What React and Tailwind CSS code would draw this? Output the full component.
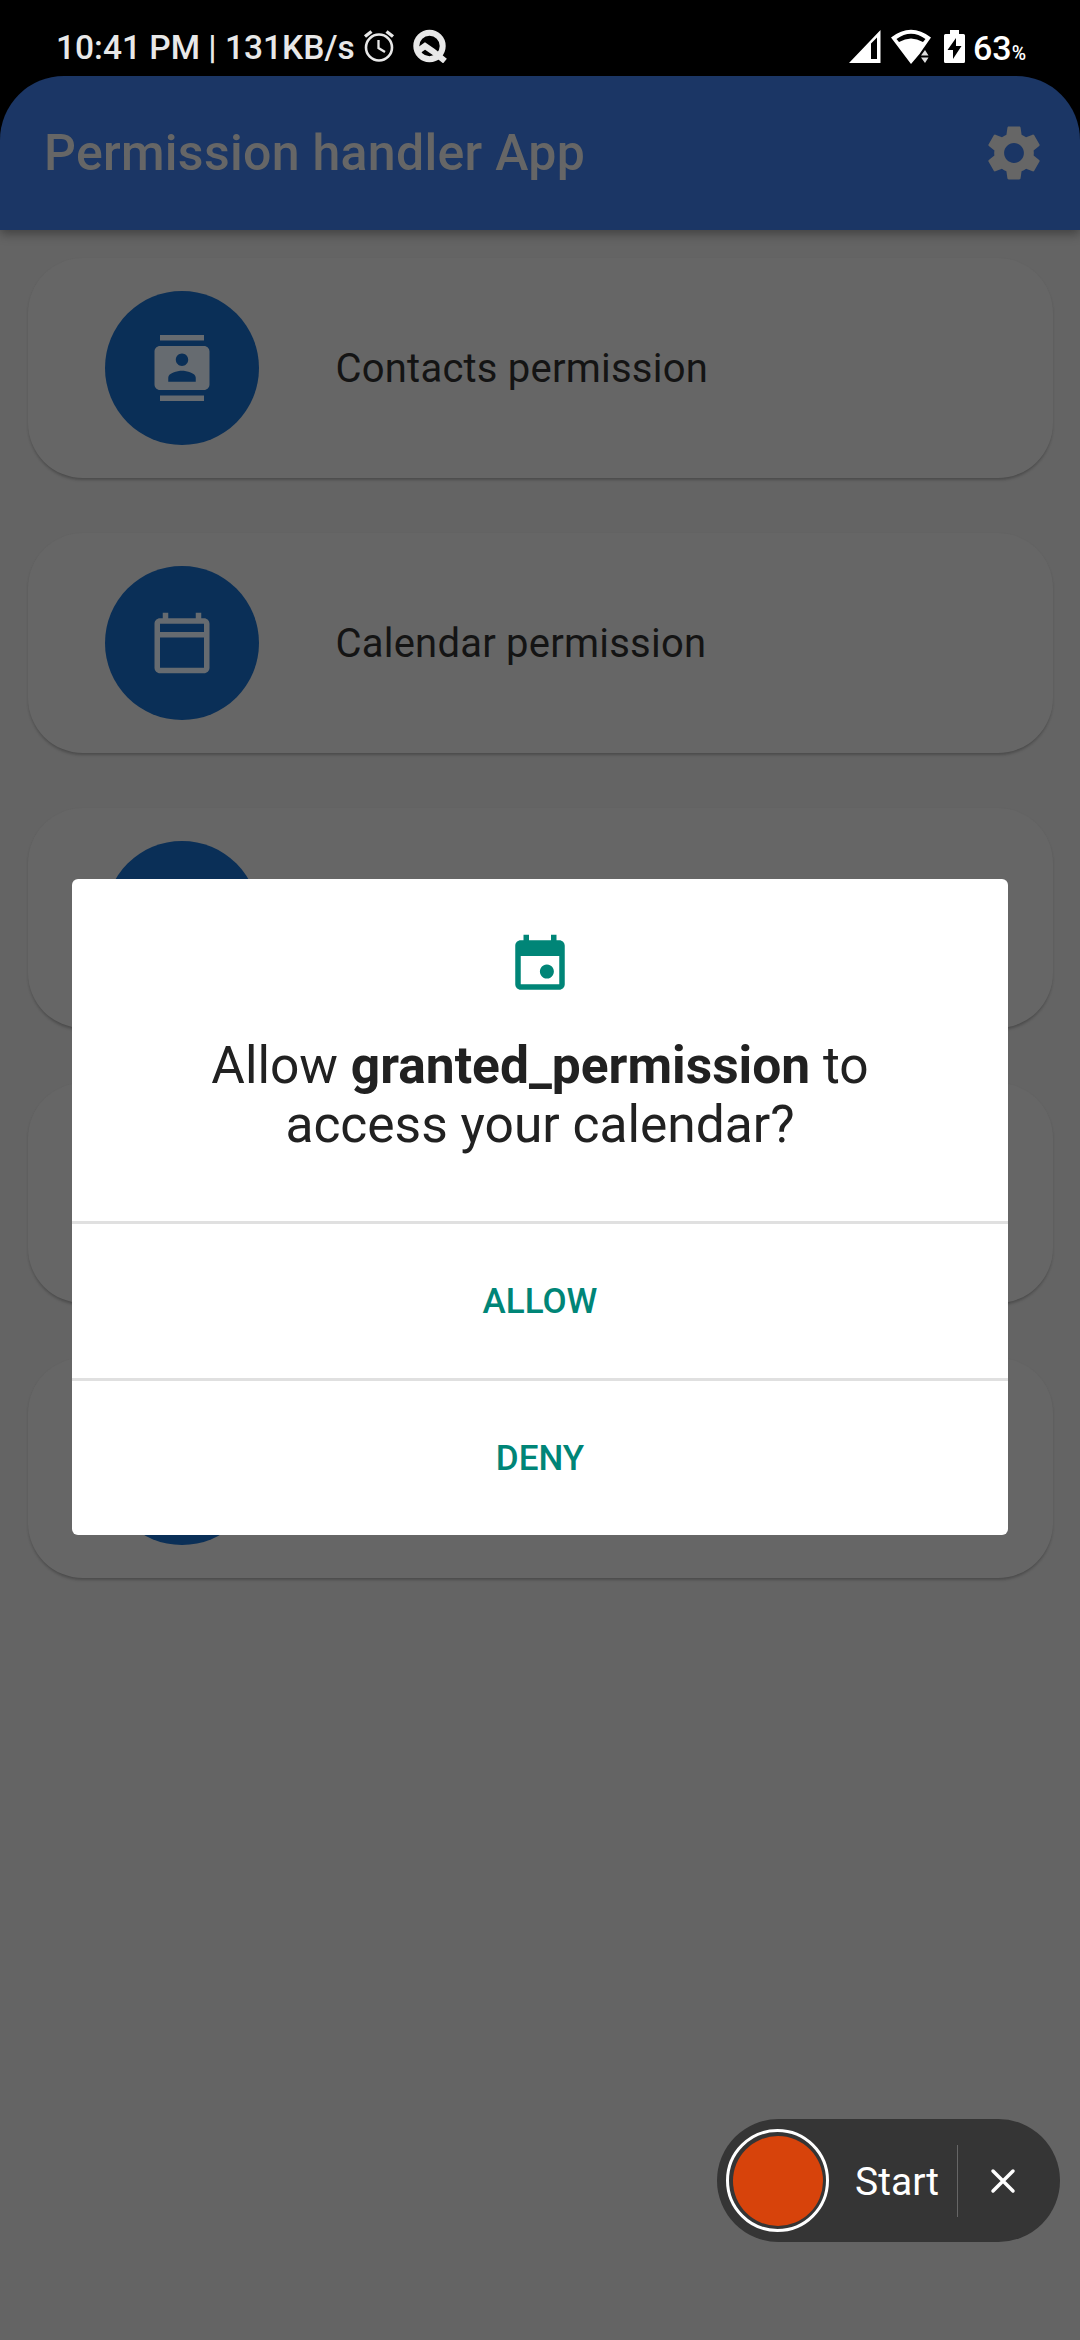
const Icon = ({ d, className, viewBox = "0 0 24 24" }) => (
  <svg viewBox={viewBox} className={className} fill="currentColor" fillRule="evenodd"><path d={d} /></svg>
);

const CONTACTS = "M20 0H4v2h16V0zM4 24h16v-2H4v2zM20 4H4c-1.1 0-2 .9-2 2v12c0 1.1.9 2 2 2h16c1.1 0 2-.9 2-2V6c0-1.1-.9-2-2-2zm-8 2.75c1.24 0 2.25 1.01 2.25 2.25s-1.01 2.25-2.25 2.25S9.75 10.24 9.75 9 10.76 6.75 12 6.75zM17 17H7v-1.5c0-1.67 3.33-2.5 5-2.5s5 .83 5 2.5V17z";
const CALENDAR = "M20 3h-1V1h-2v2H7V1H5v2H4c-1.1 0-2 .9-2 2v16c0 1.1.9 2 2 2h16c1.1 0 2-.9 2-2V5c0-1.1-.9-2-2-2zm0 18H4V10h16v11zm0-13H4V5h16v3z";
const SETTINGS = "M19.14 12.94c.04-.3.06-.61.06-.94 0-.32-.02-.64-.07-.94l2.03-1.58c.18-.14.23-.41.12-.61l-1.92-3.32c-.12-.22-.37-.29-.59-.22l-2.39.96c-.5-.38-1.03-.7-1.62-.94l-.36-2.54c-.04-.24-.24-.41-.48-.41h-3.84c-.24 0-.43.17-.47.41l-.36 2.54c-.59.24-1.13.57-1.62.94l-2.39-.96c-.22-.08-.47 0-.59.22L2.74 8.87c-.12.21-.08.47.12.61l2.03 1.58c-.05.3-.09.63-.09.94s.02.64.07.94l-2.03 1.58c-.18.14-.23.41-.12.61l1.92 3.32c.12.22.37.29.59.22l2.39-.96c.5.38 1.03.7 1.62.94l.36 2.54c.05.24.24.41.48.41h3.84c.24 0 .44-.17.47-.41l.36-2.54c.59-.24 1.13-.56 1.62-.94l2.39.96c.22.08.47 0 .59-.22l1.92-3.32c.12-.22.07-.47-.12-.61l-2.01-1.58zM12 15.6c-1.98 0-3.6-1.62-3.6-3.6s1.62-3.6 3.6-3.6 3.6 1.62 3.6 3.6-1.62 3.6-3.6 3.6z";

const rows = [
  { label: "Contacts permission", icon: CONTACTS },
  { label: "Calendar permission", icon: CALENDAR },
  { label: "", icon: null },
  { label: "", icon: null },
  { label: "", icon: null },
];

function StatusBar() {
  return (
    <div className="flex h-[76px] items-start bg-black">
      <div className="ml-[56px] mt-[28px] text-[33.5px] font-medium leading-[40px] whitespace-nowrap text-[#e8e8e8]">10:41 PM | 131KB/s</div>
      <svg className="ml-[8px] mt-[29px] h-[34px] w-[32px]" viewBox="0 0 32 34" fill="none" stroke="#e8e8e8" strokeWidth="2.6">
        <circle cx="16" cy="18.5" r="13" />
        <path d="M2 7.5 8.5 2.5M30 7.5 23.5 2.5" strokeWidth="3.4" />
        <path d="M15.5 11v8l6.5 4" strokeWidth="2.3" />
      </svg>
      <svg className="ml-[18px] mt-[29px] h-[34px] w-[34px]" viewBox="0 0 34 34" fill="none" stroke="#e8e8e8">
        <circle cx="16.5" cy="17" r="13.2" strokeWidth="6" />
        <path d="M5 22 12 17l8 5.500 12 9.500" strokeWidth="6" />
      </svg>
      <div className="ml-auto mr-[54px] mt-[29px] flex items-start text-white">
        <svg className="h-[35px] w-[32px]" viewBox="0 0 32 35">
          <path d="M0 34 31.500 1v33zM22 14.500v15.500h6V8.500z" fill="#fff" fillRule="evenodd" />
        </svg>
        <svg className="ml-[10px] h-[35px] w-[42px]" viewBox="0 0 42 35">
          <path d="M0 8.500Q20-7 40 8.500L33 18.500 28.500 25 20 35zM5.500 10 8 13Q20 6 32 13L34.500 10Q20-.5 5.500 10z" fill="#fff" fillRule="evenodd" />
          <path d="M30 26.500 34 21l3.500 5.500zM30 28.500h7.500L34 34z" fill="#ddd" />
        </svg>
        <svg className="ml-[11px] mt-px h-[33px] w-[21px]" viewBox="0 0 21 33">
          <path d="M6 0h9v4h4.500q1.500 0 1.500 1.500v26q0 1.500-1.500 1.500h-18Q0 33 0 31.500v-26Q0 4 1.500 4H6zM12 8 3.500 20H9v9L17.500 16H12z" fill="#fff" fillRule="evenodd" />
        </svg>
        <div className="ml-[8px] -mt-px text-[34px] font-medium leading-[40px]">63<span className="text-[19.5px]">%</span></div>
      </div>
    </div>
  );
}

function PermissionRow({ label, icon }) {
  return (
    <div className="flex h-[220px] shrink-0 items-center rounded-[55px] bg-[#666666] pl-[77px] shadow-[0_3px_3px_-1px_rgba(0,0,0,0.22),0_1px_3px_rgba(0,0,0,0.05)]">
      <div className="flex size-[154px] items-center justify-center rounded-full bg-[#0a2f57] text-[#666b70]">
        {icon && <Icon d={icon} className="size-[66px]" />}
      </div>
      <div className="ml-[77px] pt-[2px] text-[40px] leading-[47px] tracking-[0.22px] whitespace-nowrap text-[#141414]">{label}</div>
    </div>
  );
}

function PermissionDialog() {
  return (
    <div className="absolute left-[72px] top-[879px] flex h-[656px] w-[936px] flex-col overflow-hidden rounded-[6px] bg-white text-center">
      <div className="flex h-[342px] flex-col items-center">
        <Icon className="mt-[53px] size-[66px] text-[#008577]" d="M19 3h-1V1h-2v2H8V1H6v2H5c-1.110 0-2 .9-2 2v14c0 1.100.890 2 2 2h14c1.100 0 2-.9 2-2V5c0-1.100-.9-2-2-2zm0 16H5V8.700h14zM14.500 11.850a2.550 2.550 0 1 0 .01 0z" />
        <div className="mt-[38px] text-[51.5px] leading-[59px] text-[#212121]">Allow <b className="font-bold">granted_permission</b> to<br />access your calendar?</div>
      </div>
      <button className="h-[157px] border-t-[3px] border-[#e0e0e0] pt-[2px] text-[35px] font-medium text-[#008577]">ALLOW</button>
      <button className="h-[157px] border-t-[3px] border-[#e0e0e0] pt-[2px] text-[35px] font-medium text-[#008577]">DENY</button>
    </div>
  );
}

function Recorder() {
  return (
    <div className="absolute left-[717px] top-[2119px] flex h-[123px] w-[343px] items-center rounded-full bg-[#353535] pl-[9px] text-white">
      <div className="flex size-[103px] items-center justify-center rounded-full border-[3px] border-white">
        <div className="size-[90px] rounded-full bg-[#d7430b]" />
      </div>
      <div className="ml-[26px] w-[102px] pt-[2px] text-[39px] leading-[46px]">Start</div>
      <div className="h-[72px] w-px bg-[#666]" />
      <svg className="ml-[32px] size-[26px]" viewBox="0 0 26 26" stroke="#fff" strokeWidth="3.500" strokeLinecap="round"><path d="M3 3l20 20M23 3 3 23" /></svg>
    </div>
  );
}

export default function App() {
  return (
    <div className="relative flex h-[2340px] w-[1080px] flex-col overflow-hidden bg-[#646464] font-['Roboto',sans-serif]">
      <StatusBar />
      <div className="bg-black shadow-[0_4px_10px_rgba(0,0,0,0.35)]">
        <header className="flex h-[154px] items-center justify-between rounded-t-[64px] bg-[#1b3665] pl-[44px] pr-[33px] text-[#666666]">
          <h1 className="text-[50px] font-medium leading-[59px] tracking-[0.3px]">Permission handler App</h1>
          <Icon d={SETTINGS} className="size-[66px]" />
        </header>
      </div>
      <main className="flex flex-col gap-[55px] px-[27.5px] pt-[27.5px]">
        {rows.map((row, i) => <PermissionRow key={i} {...row} />)}
      </main>
      <PermissionDialog />
      <Recorder />
    </div>
  );
}
